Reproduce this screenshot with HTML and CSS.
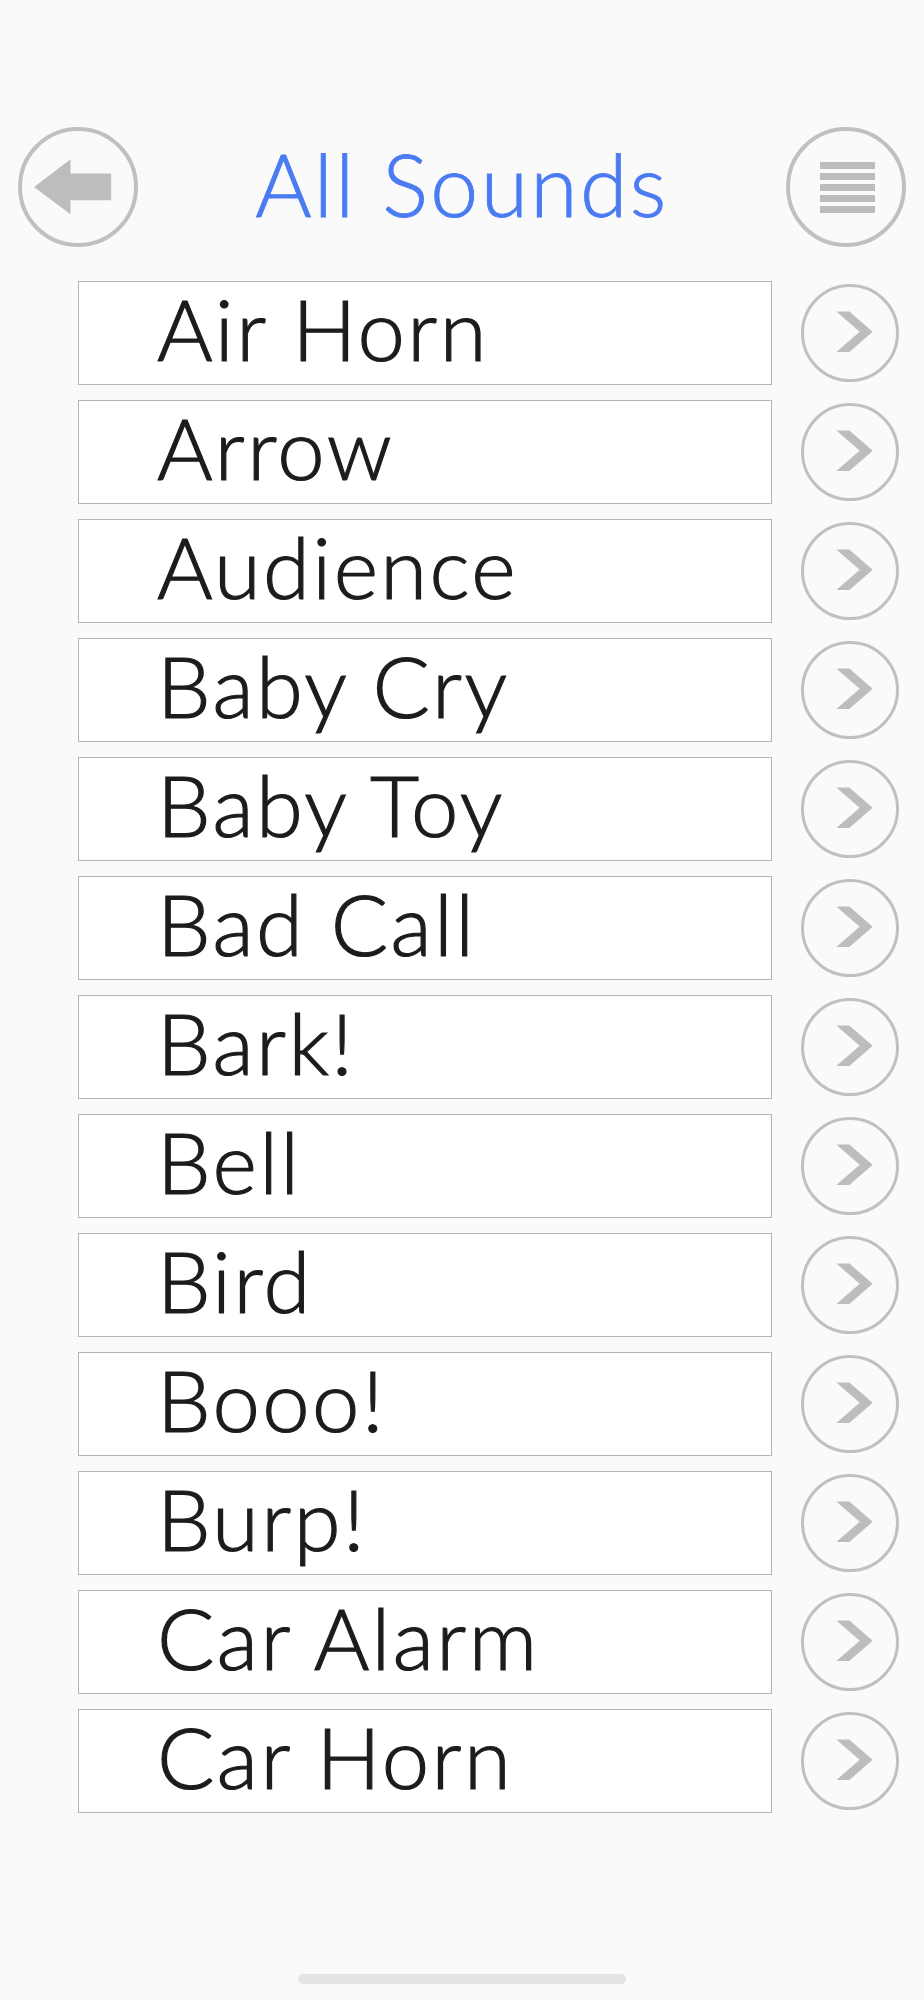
FILE: index.html
```html
<!DOCTYPE html>
<html lang="en">
<head>
<meta charset="utf-8">
<title>All Sounds</title>
<link rel="stylesheet" href="styles.css">
</head>
<body>
<div class="screen">
  <header class="top">
    <button class="circle-btn" aria-label="Back">
      <svg class="back-icon" viewBox="0 0 112 112" width="112" height="112">
        <polygon points="12,56 48.5,28.3 48.5,42.6 89.2,42.6 89.2,69.3 48.5,69.3 48.5,83.3" fill="#bdbdbd"/>
      </svg>
    </button>
    <h1 class="title">All Sounds</h1>
    <button class="circle-btn" aria-label="Menu">
      <span class="bars"><span></span><span></span><span></span><span></span><span></span></span>
    </button>
  </header>
  <ul class="list">
    <li class="row"><div class="name">Air Horn</div><span class="go"><svg viewBox="0 0 92 92" width="92" height="92"><polygon points="32.3,24.5 45.3,24.5 68.7,44.8 45.3,65.1 32.3,65.1 55.7,44.8" fill="#bdbdbd"/></svg></span></li>
    <li class="row"><div class="name">Arrow</div><span class="go"><svg viewBox="0 0 92 92" width="92" height="92"><polygon points="32.3,24.5 45.3,24.5 68.7,44.8 45.3,65.1 32.3,65.1 55.7,44.8" fill="#bdbdbd"/></svg></span></li>
    <li class="row"><div class="name">Audience</div><span class="go"><svg viewBox="0 0 92 92" width="92" height="92"><polygon points="32.3,24.5 45.3,24.5 68.7,44.8 45.3,65.1 32.3,65.1 55.7,44.8" fill="#bdbdbd"/></svg></span></li>
    <li class="row"><div class="name">Baby Cry</div><span class="go"><svg viewBox="0 0 92 92" width="92" height="92"><polygon points="32.3,24.5 45.3,24.5 68.7,44.8 45.3,65.1 32.3,65.1 55.7,44.8" fill="#bdbdbd"/></svg></span></li>
    <li class="row"><div class="name">Baby Toy</div><span class="go"><svg viewBox="0 0 92 92" width="92" height="92"><polygon points="32.3,24.5 45.3,24.5 68.7,44.8 45.3,65.1 32.3,65.1 55.7,44.8" fill="#bdbdbd"/></svg></span></li>
    <li class="row"><div class="name">Bad Call</div><span class="go"><svg viewBox="0 0 92 92" width="92" height="92"><polygon points="32.3,24.5 45.3,24.5 68.7,44.8 45.3,65.1 32.3,65.1 55.7,44.8" fill="#bdbdbd"/></svg></span></li>
    <li class="row"><div class="name">Bark!</div><span class="go"><svg viewBox="0 0 92 92" width="92" height="92"><polygon points="32.3,24.5 45.3,24.5 68.7,44.8 45.3,65.1 32.3,65.1 55.7,44.8" fill="#bdbdbd"/></svg></span></li>
    <li class="row"><div class="name">Bell</div><span class="go"><svg viewBox="0 0 92 92" width="92" height="92"><polygon points="32.3,24.5 45.3,24.5 68.7,44.8 45.3,65.1 32.3,65.1 55.7,44.8" fill="#bdbdbd"/></svg></span></li>
    <li class="row"><div class="name">Bird</div><span class="go"><svg viewBox="0 0 92 92" width="92" height="92"><polygon points="32.3,24.5 45.3,24.5 68.7,44.8 45.3,65.1 32.3,65.1 55.7,44.8" fill="#bdbdbd"/></svg></span></li>
    <li class="row"><div class="name">Booo!</div><span class="go"><svg viewBox="0 0 92 92" width="92" height="92"><polygon points="32.3,24.5 45.3,24.5 68.7,44.8 45.3,65.1 32.3,65.1 55.7,44.8" fill="#bdbdbd"/></svg></span></li>
    <li class="row"><div class="name">Burp!</div><span class="go"><svg viewBox="0 0 92 92" width="92" height="92"><polygon points="32.3,24.5 45.3,24.5 68.7,44.8 45.3,65.1 32.3,65.1 55.7,44.8" fill="#bdbdbd"/></svg></span></li>
    <li class="row"><div class="name">Car Alarm</div><span class="go"><svg viewBox="0 0 92 92" width="92" height="92"><polygon points="32.3,24.5 45.3,24.5 68.7,44.8 45.3,65.1 32.3,65.1 55.7,44.8" fill="#bdbdbd"/></svg></span></li>
    <li class="row"><div class="name">Car Horn</div><span class="go"><svg viewBox="0 0 92 92" width="92" height="92"><polygon points="32.3,24.5 45.3,24.5 68.7,44.8 45.3,65.1 32.3,65.1 55.7,44.8" fill="#bdbdbd"/></svg></span></li>
  </ul>
  <div class="home-indicator"></div>
</div>
</body>
</html>
```
FILE: styles.css
```css
html {
  background: #fafafa;
}
body {
  margin: 0;
  background: #fafafa;
  font-family: Lato, "Open Sans", "Liberation Sans", sans-serif;
}
.screen {
  width: 924px;
  min-height: 2000px;
  display: flex;
  flex-direction: column;
}
.top {
  display: flex;
  justify-content: space-between;
  align-items: center;
  padding: 127px 18px 0 18px;
}
.circle-btn {
  width: 120px;
  height: 120px;
  box-sizing: border-box;
  border: 4px solid #c0c0c0;
  border-radius: 50%;
  background: transparent;
  padding: 0;
  margin: 0;
  display: flex;
  align-items: center;
  justify-content: center;
}
.back-icon {
  display: block;
}
.bars {
  display: flex;
  flex-direction: column;
  gap: 4px;
  margin-left: 3px;
  margin-top: 1px;
}
.bars span {
  display: block;
  width: 55px;
  height: 7px;
  background: #bdbdbd;
}
.title {
  margin: 0;
  font-weight: 300;
  font-size: 86px;
  letter-spacing: 2.4px;
  line-height: 113px;
  padding-bottom: 7px;
  color: #4b7bf2;
  -webkit-text-stroke: 0.9px #4b7bf2;
}
.list {
  list-style: none;
  margin: 34px 0 0 0;
  padding: 0 25px 0 78px;
  display: flex;
  flex-direction: column;
  gap: 15px;
}
.row {
  display: flex;
  align-items: center;
  gap: 29px;
}
.name {
  flex: 1;
  height: 104px;
  box-sizing: border-box;
  border: 1px solid #b4b4b4;
  background: #ffffff;
  padding: 0 0 10px 78px;
  font-size: 85px;
  font-weight: 300;
  letter-spacing: 2.4px;
  line-height: 92px;
  color: #1c1c1c;
  -webkit-text-stroke: 1.2px #1c1c1c;
  white-space: nowrap;
}
.go {
  width: 98px;
  height: 98px;
  box-sizing: border-box;
  border: 3px solid #c0c0c0;
  border-radius: 50%;
  display: flex;
  align-items: center;
  justify-content: center;
  flex: none;
}
.go svg {
  display: block;
}
.home-indicator {
  width: 328px;
  height: 10px;
  border-radius: 5px;
  background: #e4e4e4;
  margin: 161px auto 0 auto;
}
```
